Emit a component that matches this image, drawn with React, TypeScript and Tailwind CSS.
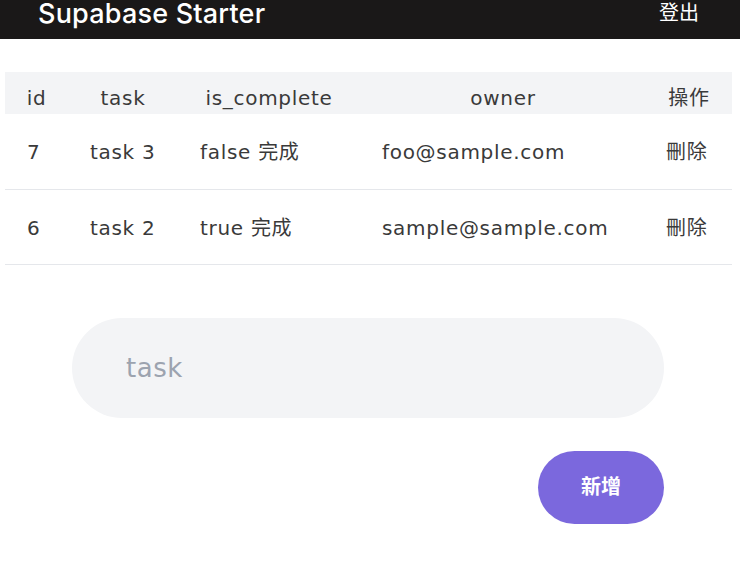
import React from "react";

export default function App() {
  const rows = [
    { id: 7, task: "task 3", done: "false", owner: "foo@sample.com" },
    { id: 6, task: "task 2", done: "true", owner: "sample@sample.com" },
  ];
  return (
    <div className="w-[740px] h-[583px] bg-white overflow-hidden font-[Inter,'Noto_Sans_CJK_TC',sans-serif]">
      <header className="h-[39px] bg-[#1a1818] flex items-start justify-between pl-[38px] pr-[41px]">
        <div className="text-white text-[27px] leading-[28px] font-medium tracking-[0.2px]">Supabase Starter</div>
        <div className="text-white text-[20px] leading-[24px] mt-[1px]">登出</div>
      </header>
      <div className="px-[5px] pr-[8px] mt-[33px]">
        <table className="w-full table-fixed border-collapse text-[#3a3a3a] text-[20px] font-['DejaVu_Sans','Noto_Sans_CJK_TC',sans-serif] tracking-[0.7px]">
          <colgroup>
            <col className="w-[63px]" />
            <col className="w-[110px]" />
            <col className="w-[182px]" />
            <col className="w-[286px]" />
            <col />
          </colgroup>
          <thead>
            <tr className="bg-[#f3f4f6] h-[42px]">
              {["id", "task", "is_complete", "owner", "操作"].map((h) => (
                <th key={h} className="font-normal text-center pt-[11px] pb-0 leading-[30px] align-top">{h}</th>
              ))}
            </tr>
          </thead>
          <tbody>
            {rows.map((r) => (
              <tr key={r.id} className="border-b border-[#e5e7eb] h-[75px]">
                <td className="pl-[22px] pt-[2px] text-left">{r.id}</td>
                <td className="pl-[22px] pt-[2px] text-left">{r.task}</td>
                <td className="pl-[22px] pt-[2px] text-left">{r.done} 完成</td>
                <td className="pl-[22px] pt-[2px] text-left">{r.owner}</td>
                <td className="pl-[20px] pt-[2px] text-left">刪除</td>
              </tr>
            ))}
          </tbody>
        </table>
      </div>
      <div className="pl-[72px] pr-[76px] mt-[53px] flex flex-col items-end gap-[33px]">
        <input
          placeholder="task"
          className="w-full h-[100px] rounded-full bg-[#f3f4f6] pl-[54px] text-[26px] text-[#3a3a3a] placeholder:text-[#9ca3af] outline-none font-['DejaVu_Sans',sans-serif] tracking-[0.5px]"
        />
        <button className="w-[126px] h-[73px] rounded-full bg-[#7b68dd] text-white text-[20px] font-bold">新增</button>
      </div>
    </div>
  );
}
